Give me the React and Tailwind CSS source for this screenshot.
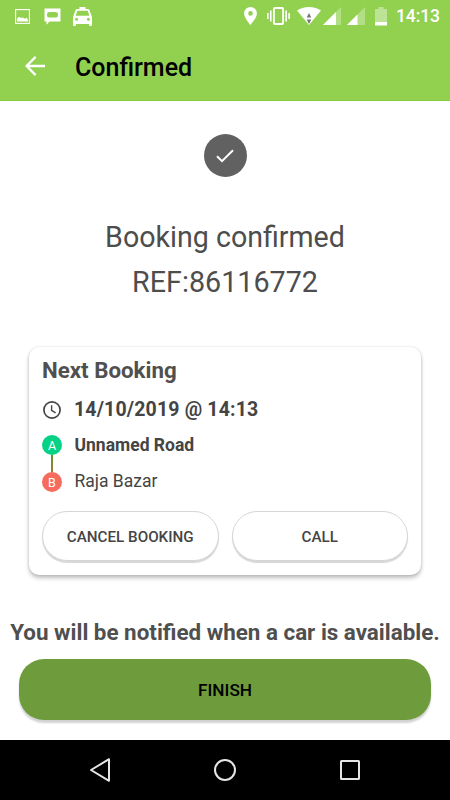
function StatusBar() {
  return (
    <div className="flex h-8 items-center pl-[15px] pr-[10px] text-white">
      {/* Notifications */}
      <svg width="15" height="15" viewBox="0 0 15 15" fill="currentColor">
        <rect x="0.6" y="0.6" width="13.8" height="13.8" fill="none" stroke="currentColor" strokeWidth="1.1" />
        <path d="M2 12.6V9.8L4 7.8L6 9L8 8.6L9.5 9.8L11.5 8.8L13 11V12.6Z" />
      </svg>
      <svg className="ml-[14px]" width="17" height="17" viewBox="0 0 17 17" fill="currentColor">
        <path fillRule="evenodd" d="M0.5 0.5H16.5V13.5H5.5L2.5 16.7V13.5H0.5ZM5.5 4Q3 4 3 6.2V7.4Q3 9.6 5.5 9.6H11.5Q14 9.6 14 7.4V6.2Q14 4 11.5 4Z" />
      </svg>
      <svg className="ml-3" width="19" height="19" viewBox="0 0 19 19" fill="currentColor">
        <path fillRule="evenodd" d="M6.5 0H12.5V2H14.8Q16 2 16.4 3.1L19 10V18Q19 19 18 19H17Q16 19 16 18V17H3V18Q3 19 2 19H1Q0 19 0 18V10L2.6 3.1Q3 2 4.2 2H6.5ZM4.3 3.8L2.6 8.8H16.4L14.7 3.8ZM3.6 10.8A1.5 1.5 0 1 0 3.6 13.8A1.5 1.5 0 1 0 3.6 10.8ZM15.4 10.8A1.5 1.5 0 1 0 15.4 13.8A1.5 1.5 0 1 0 15.4 10.8Z" />
      </svg>

      {/* System icons */}
      <svg className="ml-auto" width="13" height="18" viewBox="0 0 13 18" fill="currentColor">
        <path fillRule="evenodd" d="M6.5 0A6.4 6.4 0 0 0 0.1 6.4C0.1 10.8 6.5 18 6.5 18S12.9 10.8 12.9 6.4A6.4 6.4 0 0 0 6.5 0ZM6.5 4.1A2.3 2.3 0 1 1 6.5 8.7A2.3 2.3 0 1 1 6.5 4.1Z" />
      </svg>
      <svg className="ml-[10px]" width="23" height="18" viewBox="0 0 23 18" fill="none" stroke="currentColor" strokeWidth="1.6">
        <rect x="6.9" y="1" width="9.2" height="16" rx="1" strokeWidth="1.9" />
        <path d="M3.8 3.5V14.5M19.2 3.5V14.5M0.9 6V12M22.1 6V12" />
      </svg>
      <svg className="ml-[7px]" width="24" height="18" viewBox="0 0 24 18">
        <path d="M12 18L0 3.6Q5 0 12 0T24 3.6Z" fill="currentColor" />
        <path d="M12 6L14.3 10.4H9.7ZM12 17L9.7 12.6H14.3Z" fill="#777" />
      </svg>
      <svg className="ml-[2px]" width="18" height="18" viewBox="0 0 18 18" fill="currentColor">
        <path d="M0 18L18 0V18Z" opacity="0.3" />
        <path d="M0 18L13 5V18Z" />
      </svg>
      <svg className="ml-[6px]" width="18" height="18" viewBox="0 0 18 18" fill="currentColor">
        <path d="M0 18L18 0V18Z" opacity="0.3" />
        <path d="M0 18L10.5 7.5V18Z" />
      </svg>
      <svg className="ml-[10px]" width="12" height="19" viewBox="0 0 12 19" fill="currentColor">
        <path d="M3.5 0H8.5V2H12V15H0V2H3.5Z" opacity="0.4" />
        <path d="M0 15H12V18.5H0Z" />
      </svg>
      <span className="ml-[9px] w-[44px] whitespace-nowrap pt-px text-[17.5px] font-medium leading-[31px] tracking-[-0.1px]">14:13</span>
    </div>
  );
}

function Header() {
  return (
    <header className="h-[101px] border-b border-[#86cb3c] bg-[#92d150]">
      <StatusBar />
      <div className="flex h-[68px] items-center pl-[25px]">
        <svg width="20" height="20" viewBox="0 0 20 20" fill="none" stroke="white" strokeWidth="2.3">
          <path d="M20 10H2M10.6 0.9L1.6 10L10.6 19.1" />
        </svg>
        <h1 className="ml-[30px] pt-[3px] text-[25px] font-medium leading-8 text-black">Confirmed</h1>
      </div>
    </header>
  );
}

function Marker({ label, className }) {
  return (
    <span className={`flex size-5 items-center justify-center rounded-full pt-px text-[12.5px] leading-5 text-white ${className}`}>
      {label}
    </span>
  );
}

function BookingCard() {
  return (
    <section className="mx-[29px] mt-[42px] h-[228px] rounded-[10px] bg-white px-[13px] pt-[10px] shadow-[0_3px_4px_rgba(0,0,0,0.26),0_0_2px_rgba(0,0,0,0.16)]">
      <h2 className="text-[22.3px] font-bold leading-[27px] text-[#505050]">Next Booking</h2>
      <div className="mt-[11px] flex h-7 items-center">
        <svg className="mt-[2px]" width="20" height="20" viewBox="0 0 20 20" fill="none" stroke="#444" strokeWidth="1.7">
          <circle cx="10" cy="10" r="8.1" />
          <path d="M9.6 5.2V10.3L13.6 12.8" strokeWidth="1.4" />
        </svg>
        <span className="ml-3 pt-px text-[19.5px] font-bold leading-7 tracking-[0.17px] text-[#444]">14/10/2019 @ 14:13</span>
      </div>
      <div className="mt-3 flex">
        <div className="flex w-5 flex-col items-center">
          <Marker label="A" className="bg-[#06d285]" />
          <span className="h-[17px] w-[2px] bg-linear-to-b from-[#4f9a20] to-[#a8743a]" />
          <Marker label="B" className="bg-[#f56b5e]" />
        </div>
        <div className="ml-[12.5px] flex flex-col gap-4 text-[17.5px] leading-5 text-[#444]">
          <span className="font-bold">Unnamed Road</span>
          <span>Raja Bazar</span>
        </div>
      </div>
      <div className="mt-[19px] grid grid-cols-2 gap-[13px]">
        <CardButton>CANCEL BOOKING</CardButton>
        <CardButton>CALL</CardButton>
      </div>
    </section>
  );
}

function CardButton({ children }) {
  return (
    <button className="h-[50px] rounded-full border border-[#d6d6d6] bg-white pt-[2px] text-[15.2px] font-medium text-[#444] shadow-[0_2px_1px_rgba(0,0,0,0.16)]">
      {children}
    </button>
  );
}

function NavBar() {
  return (
    <nav className="flex h-[60px] items-center justify-between bg-black px-[88px]">
      <svg width="24" height="26" viewBox="0 0 24 26" fill="none" stroke="#e6e6e6" strokeWidth="2" strokeLinejoin="round">
        <path d="M21 2.2V23.8L3 13Z" />
      </svg>
      <svg width="24" height="24" viewBox="0 0 24 24" fill="none" stroke="#e6e6e6" strokeWidth="2">
        <circle cx="12" cy="12" r="10" />
      </svg>
      <svg width="24" height="24" viewBox="0 0 24 24" fill="none" stroke="#e6e6e6" strokeWidth="2">
        <rect x="3" y="3" width="18" height="18" rx="0.5" />
      </svg>
    </nav>
  );
}

export default function App() {
  return (
    <div className="flex h-[800px] w-[450px] flex-col overflow-hidden bg-white font-['Roboto',sans-serif]">
      <Header />
      <main className="flex flex-1 flex-col">
        <div className="mx-auto mt-[33px] flex size-[43px] items-center justify-center rounded-full bg-[#616161]">
          <svg width="18" height="14" viewBox="0 0 18 14" fill="none" stroke="white" strokeWidth="2">
            <path d="M1 7.2L6 12.2L17 1.2" />
          </svg>
        </div>
        <div className="mt-[38px] text-center text-[#4d4d4d]">
          <p className="text-[28.6px] leading-[45px]">Booking confirmed</p>
          <p className="text-[28.7px] leading-[45px]">REF:86116772</p>
        </div>
        <BookingCard />
        <p className="mt-[43px] whitespace-nowrap text-center text-[22.4px] font-bold leading-[28px] text-[#4f4f4f]">
          You will be notified when a car is available.
        </p>
        <button className="mx-[19px] mt-[13px] h-[61px] rounded-[25px] bg-[#6e9c3c] pt-[3px] text-[17.2px] font-medium text-black shadow-[0_3px_2px_rgba(0,0,0,0.18)]">
          FINISH
        </button>
      </main>
      <NavBar />
    </div>
  );
}
